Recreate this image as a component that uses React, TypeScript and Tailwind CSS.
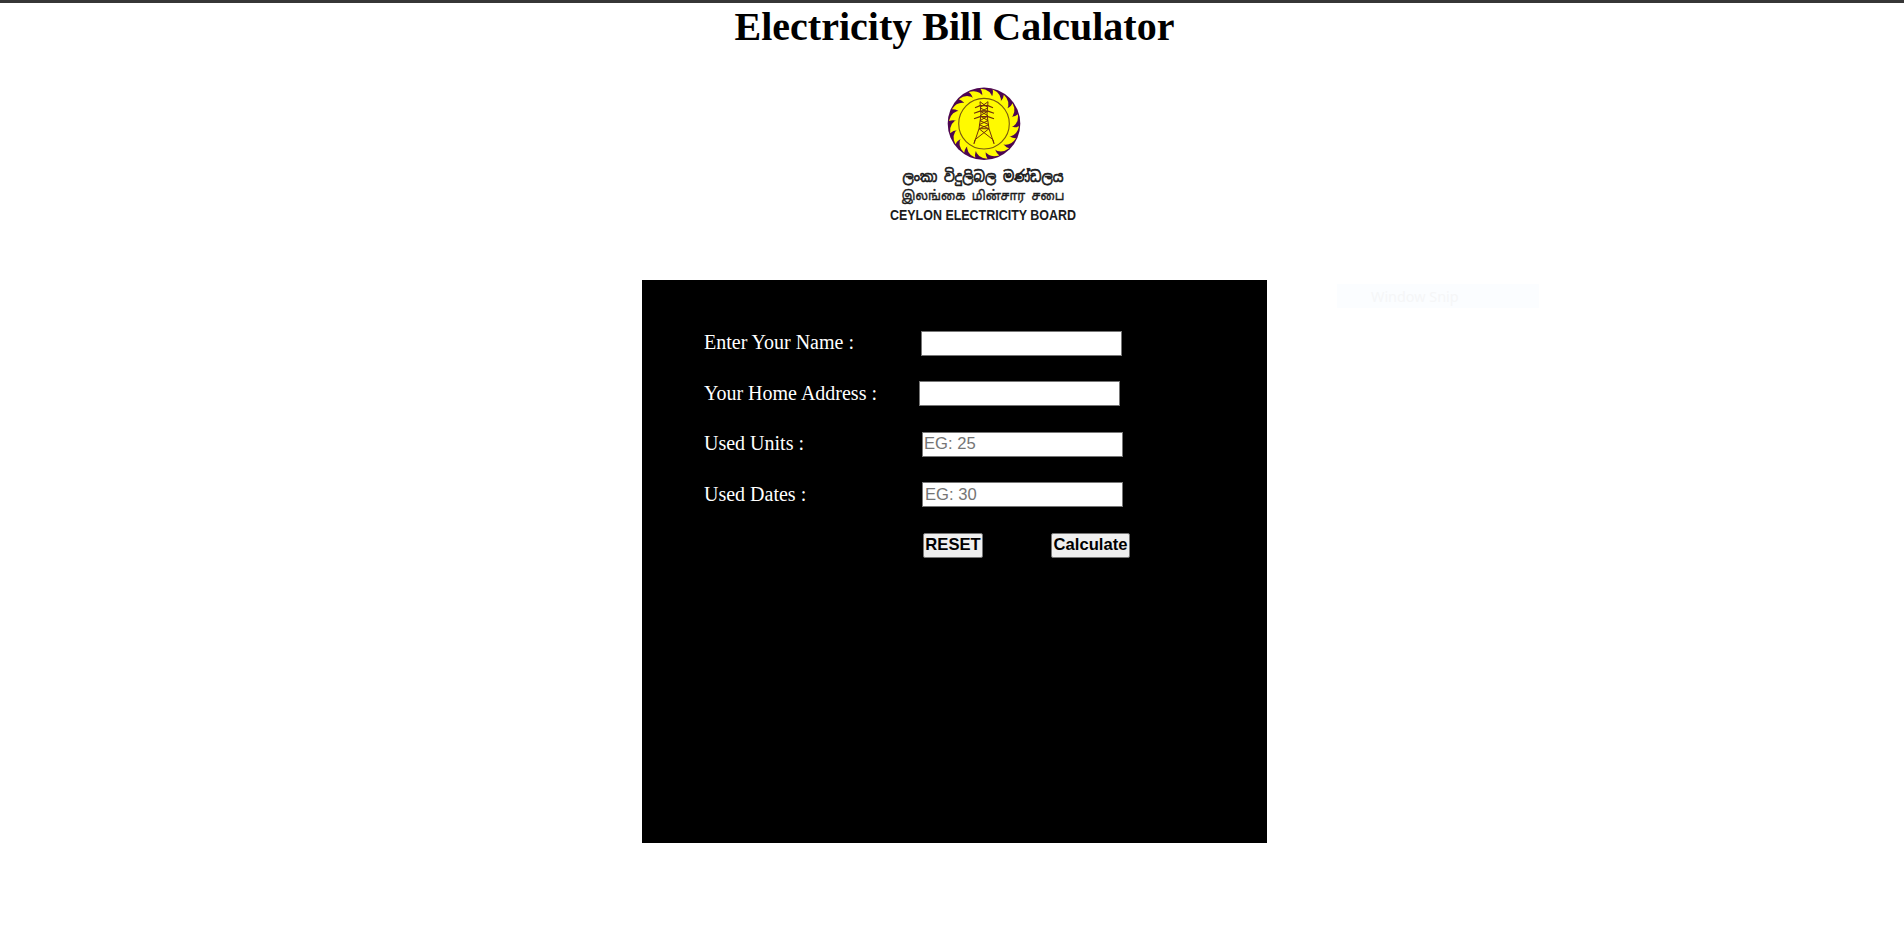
const blades = Array.from({ length: 18 }, (_, i) => i * 20);

function Logo() {
  return (
    <svg
      viewBox="0 0 200 146"
      className="ml-[61px] mt-[32px] h-[146px] w-[200px] overflow-visible"
      role="img"
      aria-label="Ceylon Electricity Board"
    >
      <g transform="translate(101 42.7)">
        <circle r="36.3" fill="#4d0650" />
        {blades.map((a) => (
          <path
            key={a}
            transform={`rotate(${a})`}
            d="M-3.5 -35 Q7 -34.5 9 -24.5 L3 -20 L-3 -24 Q-0.2 -30 -3.5 -35Z"
            fill="#fffa00"
          />
        ))}
        <circle r="25.3" fill="#fffa00" stroke="#7a5a10" strokeWidth="1.1" />
        <g fill="none" stroke="#70300c" strokeWidth="1">
          <path d="M-4 -22 L-3 -9 L-5 5 L-10 20 M4 -22 L3 -9 L5 5 L10 20" />
          <path d="M-4 -22 L4 -16 L-3 -12 L4 -8 L-4 -3 L5 1 L-5 5 L9 16 L10 20 M4 -22 L-4 -16 L3 -12 L-4 -8 L4 -3 L-5 1 L5 5 L-9 16 L-10 20 M-5 5 H5" />
          <path d="M-9 -16 L-4 -18 H4 L9 -16 M-10 -10.5 L-4 -12.5 H4 L10 -10.5 M-10 -5 L-4 -7 H4 L10 -5" strokeWidth="1.2" />
        </g>
      </g>
      <g fill="#1c1c1c" stroke="#1c1c1c" fontFamily="'Noto Sans Sinhala', 'Noto Sans Tamil', 'Noto Sans', sans-serif">
        <text x="19.5" y="101" fontSize="15" strokeWidth="0.7" textLength="161" lengthAdjust="spacingAndGlyphs">
          ලංකා විදුලිබල මණ්ඩලය
        </text>
        <text x="18.5" y="119" fontSize="13.5" strokeWidth="0.4" textLength="163" lengthAdjust="spacingAndGlyphs">
          இலங்கை மின்சார சபை
        </text>
      </g>
      <text
        x="7"
        y="138.5"
        fontSize="15.5"
        fontWeight="700"
        fontFamily="'Liberation Sans', sans-serif"
        fill="#1c1c1c"
        textLength="186"
        lengthAdjust="spacingAndGlyphs"
      >
        CEYLON ELECTRICITY BOARD
      </text>
    </svg>
  );
}

const labelClass = "text-[20px] leading-[24px] text-white [font-family:'Liberation_Serif',serif]";
const inputClass =
  "h-[25px] w-[201px] border border-[#767676] bg-white text-[16.6px] leading-5 text-black outline-none placeholder:text-[#757575]";
const buttonClass =
  "h-[25px] rounded-[2px] border border-[#767676] bg-[#efefef] pb-px text-[16.6px] font-bold leading-5 text-black whitespace-nowrap";

export default function App() {
  return (
    <div className="h-[943px] overflow-hidden bg-white [font-family:'Liberation_Sans',sans-serif]">
      <div className="h-[3px] bg-[#363636]" />
      <header className="flex flex-col items-center">
        <h1 className="h-[46px] pl-[5px] text-[40px] font-bold leading-[47px] text-black [font-family:'Liberation_Serif',serif]">
          Electricity Bill Calculator
        </h1>
        <Logo />
      </header>
      <main className="mt-[53px] flex items-start pl-[642px]">
        <form className="flex h-[563px] w-[625px] flex-col bg-black pl-[62px] pt-[51px]" onSubmit={(e) => e.preventDefault()}>
          <div className="mb-[25px] flex">
            <label htmlFor="name" className={`${labelClass} -mt-px w-[217px]`}>Enter Your Name :</label>
            <input id="name" className={`${inputClass} px-px pb-px`} />
          </div>
          <div className="mb-[26px] flex">
            <label htmlFor="address" className={`${labelClass} w-[215px]`}>Your Home Address :</label>
            <input id="address" className={`${inputClass} px-px pb-px`} />
          </div>
          <div className="mb-[25px] flex">
            <label htmlFor="units" className={`${labelClass} -mt-px w-[218px]`}>Used Units :</label>
            <input id="units" placeholder="EG: 25" className={`${inputClass} px-px pb-px`} />
          </div>
          <div className="mb-[26px] flex">
            <label htmlFor="dates" className={`${labelClass} w-[218px]`}>Used Dates :</label>
            <input id="dates" placeholder="EG: 30" className={`${inputClass} pl-[2px] pt-px`} />
          </div>
          <div className="flex gap-[68px] pl-[219px]">
            <button type="reset" className={`${buttonClass} w-[60px]`}>RESET</button>
            <button type="submit" className={`${buttonClass} w-[79px]`}>Calculate</button>
          </div>
        </form>
        <div className="ml-[70px] mt-1 h-6 w-[202px] bg-[#fbfdff] pl-[34px] text-[14.4px] leading-[26px] text-[#f5f6f7] [font-family:'Noto_Sans',sans-serif]">
          Window Snip
        </div>
      </main>
    </div>
  );
}
